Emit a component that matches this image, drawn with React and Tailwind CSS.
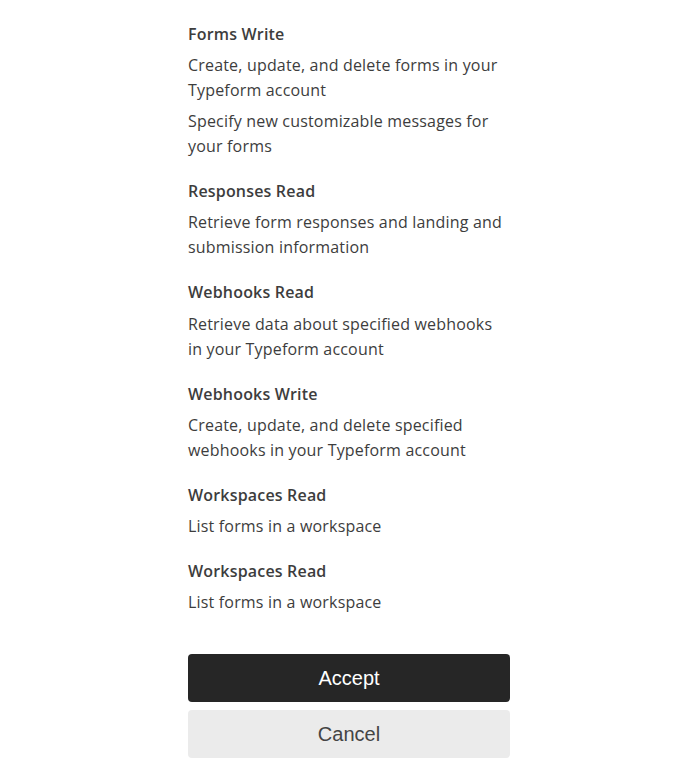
const scopes = [
  {
    title: 'Forms Write',
    lines: ['Create, update, and delete forms in your Typeform account', 'Specify new customizable messages for your forms'],
  },
  { title: 'Responses Read', lines: ['Retrieve form responses and landing and submission information'] },
  { title: 'Webhooks Read', lines: ['Retrieve data about specified webhooks in your Typeform account'] },
  { title: 'Webhooks Write', lines: ['Create, update, and delete specified webhooks in your Typeform account'] },
  { title: 'Workspaces Read', lines: ['List forms in a workspace'] },
  { title: 'Workspaces Read', lines: ['List forms in a workspace'] },
];

export default function App() {
  return (
    <div className="min-h-[775px] bg-white" style={{ fontFamily: '"Open Sans", sans-serif' }}>
      <div className="ml-[188px] w-[322px] pt-[22px] text-[#3d3d3d]">
        <ul className="flex flex-col gap-5 tracking-[0.18px]">
          {scopes.map((s, i) => (
            <li key={i}>
              <h3 className="text-base font-semibold leading-[25px]">{s.title}</h3>
              <div className="mt-[6.2px] flex flex-col gap-1.5">
                {s.lines.map((l, j) => (
                  <p key={j} className="text-base leading-[25px]">{l}</p>
                ))}
              </div>
            </li>
          ))}
        </ul>

        {/* actions */}
        <div className="mt-[39px] flex flex-col gap-2 font-['Liberation_Sans',Arial,sans-serif]">
          <button className="h-12 w-full rounded bg-[#262626] text-[20px] font-medium text-white">Accept</button>
          <button className="h-12 w-full rounded bg-[#ebebeb] text-[20px] text-[#444]">Cancel</button>
        </div>
      </div>
    </div>
  );
}
